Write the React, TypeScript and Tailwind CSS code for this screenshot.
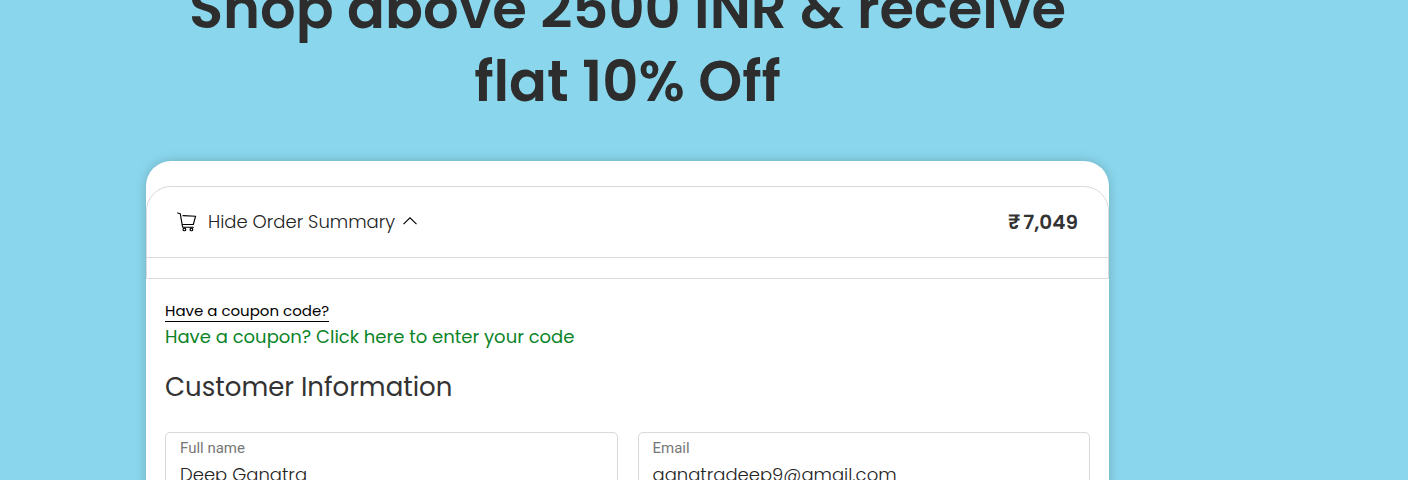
import React from "react";

function CartIcon() {
  return (
    <svg
      width="20"
      height="20"
      viewBox="0 0 20 20"
      fill="none"
      stroke="#000"
      strokeWidth="1.15"
      strokeLinecap="round"
      strokeLinejoin="round"
      aria-hidden="true"
    >
      <path d="M0.6 1 3.3 1.8 5.6 15.2h10.8" />
      <path d="M6 3.6 18.6 4.2 16.3 12.5H5.4" />
      <circle cx="7.4" cy="17.4" r="1.35" />
      <circle cx="14.4" cy="17.4" r="1.35" />
    </svg>
  );
}

function ChevronUp() {
  return (
    <svg width="14" height="10" viewBox="0 0 14 10" fill="none" stroke="#000" strokeWidth="1.1" aria-hidden="true">
      <path d="M0.5 7.2 7 0.8l6.5 6.4" />
    </svg>
  );
}

type FieldProps = { id: string; label: string; type: string; value: string };

function Field({ id, label, type, value }: FieldProps) {
  return (
    <div className="flex flex-1 flex-col rounded-[5px] border border-[#d9d9d9] px-3.5 pt-1 pb-2">
      <label htmlFor={id} className="font-[Roboto,sans-serif] text-[15px] leading-[22px] text-[#777]">
        {label}
      </label>
      <input
        id={id}
        type={type}
        defaultValue={value}
        className="w-full bg-transparent text-[18px] leading-8 font-light text-[#222] outline-none"
      />
    </div>
  );
}

export default function App() {
  return (
    <div className="flex h-screen flex-col overflow-hidden bg-[#8ad7ed] pr-[299px] pl-[146px] font-[Poppins,Inter,sans-serif] text-[#333]">
      <h1 className="-mt-7 shrink-0 text-center text-[56px] leading-[73px] font-semibold text-[#2d2d2d]">
        Shop above 2500 INR &amp; receive
        <br />
        flat 10% Off
      </h1>
      <main className="mt-[43px] shrink-0 rounded-[25px] bg-white pt-[25px] pb-10 shadow-[0_0_12px_rgba(0,0,0,0.2)]">
        <section className="rounded-t-[25px] border border-[#d9d9d9]">
          <div className="flex h-[71px] items-center justify-between border-b border-[#d9d9d9] px-[30px]">
            <button type="button" className="flex items-center text-[18px] leading-6 font-light text-[#222]">
              <CartIcon />
              <span className="mr-2 ml-[11px]">Hide Order Summary</span>
              <ChevronUp />
            </button>
            <span className="flex gap-[3px] text-[20px] leading-7 font-semibold">
              <span>₹</span>
              <span>7,049</span>
            </span>
          </div>
          <div className="h-5" />
        </section>
        <div className="px-[19px]">
          <div className="flex flex-col items-start pt-[21px]">
            <a href="#coupon" className="border-b border-black text-[15px] leading-[21px] text-black">
              Have a coupon code?
            </a>
            <a href="#coupon" className="mt-[3px] text-[18px] leading-6 text-[#0b8427]">
              Have a coupon? Click here to enter your code
            </a>
          </div>
          <h2 className="mt-5 text-[26px] leading-9">Customer Information</h2>
          <form className="mt-[27px] flex gap-5">
            <Field id="full-name" label="Full name" type="text" value="Deep Ganatra" />
            <Field id="email" label="Email" type="email" value="ganatradeep9@gmail.com" />
          </form>
        </div>
      </main>
    </div>
  );
}
